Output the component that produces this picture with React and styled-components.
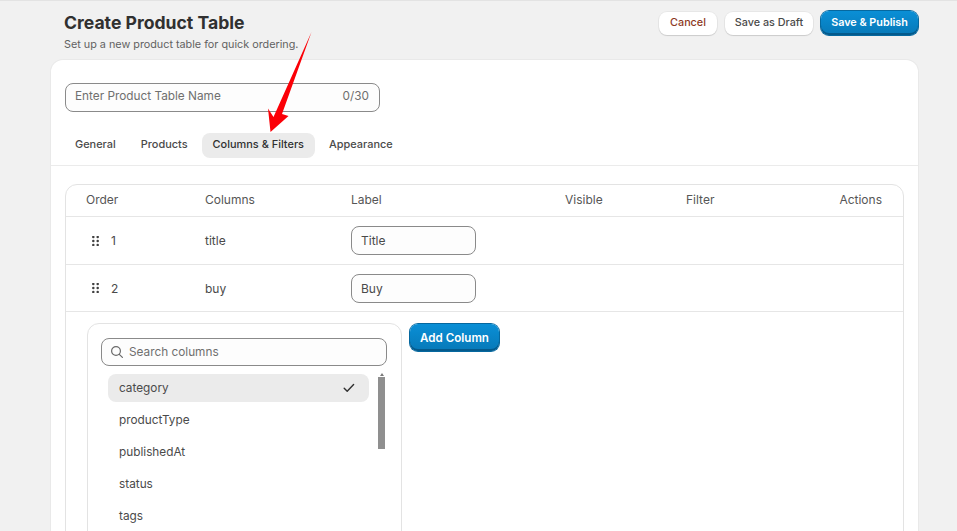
import React from 'react';
import styled, { createGlobalStyle } from 'styled-components';

const Global = createGlobalStyle`
  html, body { margin: 0; padding: 0; height: 531px; overflow: hidden; background: #f1f1f1; }
  body { font-family: Inter, "Liberation Sans", sans-serif; color: #303030; }
  * { box-sizing: border-box; }
`;

const Page = styled.div`
  position: relative;
  height: 531px;
  overflow: hidden;
  border-top: 1px solid #e3e3e3;
  padding: 0 39px 0 51px;
`;
const Header = styled.header`
  display: flex;
  justify-content: space-between;
  align-items: flex-start;
  height: 59px;
  padding: 10px 0 0 13px;
`;
const Title = styled.h1`
  margin: 0;
  font-size: 17.6px;
  line-height: 24px;
  font-weight: 650;
  color: #303030;
`;
const Subtitle = styled.p`
  margin: 2px 0 0;
  font-size: 10.8px;
  line-height: 16px;
  color: #616161;
`;
const Actions = styled.div`
  display: flex;
  gap: 8px;
  padding-top: 1px;
`;
const Button = styled.button`
  height: 23px;
  width: ${p => p.$w}px;
  padding: 0 0 2px;
  border: 0;
  border-radius: 8px;
  background: #fff;
  color: ${p => p.$tone || '#4a4a4a'};
  font: 550 10.8px Inter, sans-serif;
  box-shadow: 0 1px 1px rgba(0,0,0,.12), 0 0 0 1px rgba(0,0,0,.04);
`;
const Primary = styled.button`
  height: ${p => p.$h}px;
  width: ${p => p.$w}px;
  margin-top: ${p => p.$top || 0}px;
  padding: 0 0 ${p => p.$lift || 0}px;
  border: 0;
  border-radius: 8px;
  background: linear-gradient(#0a8fd6, #0779b8);
  color: #fff;
  font: 600 ${p => p.$size}px Inter, sans-serif;
  box-shadow: inset 0 -2px 0 #045a8c, 0 0 0 1px #06689f;
`;
const Card = styled.main`
  background: #fff;
  border-radius: 12px;
  box-shadow: 0 0 0 1px #e9e9e9;
  height: 600px;
`;
const Top = styled.div`
  padding: 23px 14px 7px;
  border-bottom: 1px solid #ebebeb;
`;
const NameField = styled.div`
  width: 315px;
  height: 29px;
  padding: 0 10px 3px 9px;
  display: flex;
  align-items: center;
  justify-content: space-between;
  background: #fdfdfd;
  border: 1px solid #8a8a8a;
  border-radius: 8px;
  font-size: 11.8px;
  color: #6f6f6f;
`;
const Tabs = styled.nav`
  display: flex;
  gap: 3px;
  margin-top: 21px;
  margin-left: -1px;
`;
const Tab = styled.div`
  height: 25px;
  padding: 0 11px 3px;
  display: flex;
  align-items: center;
  border-radius: 8px;
  font-size: 10.95px;
  font-weight: 500;
  background: ${p => (p.$active ? '#ebebeb' : 'transparent')};
  color: ${p => (p.$active ? '#303030' : '#4a4a4a')};
`;
const TableBox = styled.section`
  margin: 18px 14px 0;
  border: 1px solid #e3e3e3;
  border-radius: 12px;
`;
const Row = styled.div`
  display: grid;
  grid-template-columns: 119px 146px 214px 121px 1fr 100px;
  align-items: center;
  height: ${p => p.$h}px;
  padding: 0 21px 0 20px;
  border-bottom: 1px solid #e6e6e6;
  font-size: 12px;
  color: #4a4a4a;
`;
const HeadCell = styled.div`
  text-align: ${p => (p.$right ? 'right' : 'left')};
  color: #565656;
  padding-bottom: 2px;
`;
const OrderCell = styled.div`
  display: flex;
  align-items: center;
  gap: 11px;
  padding-left: 6px;
`;
const LabelField = styled.div`
  width: 125px;
  height: 29px;
  padding: 0 9px;
  display: flex;
  align-items: center;
  border: 1px solid #8a8a8a;
  border-radius: 8px;
  background: #fdfdfd;
  color: #4a4a4a;
`;
const AddArea = styled.div`
  display: flex;
  align-items: flex-start;
  gap: 8px;
  padding: 11px 21px;
`;
const Panel = styled.div`
  width: 315px;
  height: 260px;
  padding: 14px 14px 0 13px;
  border: 1px solid #e3e3e3;
  border-radius: 12px;
`;
const Search = styled.div`
  height: 28px;
  padding: 0 8px 1px;
  display: flex;
  align-items: center;
  gap: 5px;
  border: 1px solid #8a8a8a;
  border-radius: 8px;
  background: #fdfdfd;
  font-size: 11.8px;
  color: #6f6f6f;
`;
const ListWrap = styled.div`
  display: flex;
  gap: 9px;
  margin-top: 8px;
  padding-left: 7px;
`;
const List = styled.div`
  width: 261px;
`;
const Item = styled.div`
  height: 28px;
  margin-bottom: 4px;
  padding: 0 14px 1px 11px;
  display: flex;
  align-items: center;
  justify-content: space-between;
  border-radius: 8px;
  font-size: 11.8px;
  color: #4a4a4a;
  background: ${p => (p.$selected ? '#ebebeb' : 'transparent')};
`;
const ScrollTrack = styled.div`
  width: 7px;
  display: flex;
  flex-direction: column;
  align-items: center;
`;
const ScrollThumb = styled.div`
  width: 7px;
  height: 72px;
  margin-top: 1px;
  background: #8f8f8f;
`;
const ScrollUp = styled.div`
  width: 0;
  height: 0;
  border-left: 2.5px solid transparent;
  border-right: 2.5px solid transparent;
  border-bottom: 3px solid #7a7a7a;
  margin-top: -1px;
`;
const ArrowOverlay = styled.svg`
  position: absolute;
  left: 0;
  top: -1px;
  pointer-events: none;
`;

const Grip = () => (
  <svg width="8" height="10" viewBox="0 0 8 10" fill="#3f3f3f">
    {[1, 5, 9].map(y => [1.3, 5.7].map(x => <circle key={`${x}-${y}`} cx={x} cy={y} r="1.25" />))}
  </svg>
);

const SearchIcon = () => (
  <svg width="14" height="14" viewBox="0 0 14 14" fill="none" stroke="#6a6a6a" strokeWidth="1.2" strokeLinecap="round">
    <circle cx="6" cy="6" r="4.4" />
    <path d="M9.3 9.3 12.4 12.4" />
  </svg>
);

const Check = () => (
  <svg width="12" height="10" viewBox="0 0 12 10" fill="none" stroke="#303030" strokeWidth="1.4" strokeLinecap="round" strokeLinejoin="round">
    <path d="M1.2 5.2 4.2 8.2 10.6 1.6" />
  </svg>
);

const columns = ['category', 'productType', 'publishedAt', 'status', 'tags'];

export default function App() {
  return (
    <>
      <Global />
      <Page>
        <Header>
          <div>
            <Title>Create Product Table</Title>
            <Subtitle>Set up a new product table for quick ordering.</Subtitle>
          </div>
          <Actions>
            <Button $w={58} $tone="#8e3a1e">Cancel</Button>
            <Button $w={88}>Save as Draft</Button>
            <Primary $w={97} $h={24} $size={10.8} $top={-1} $lift={2}>Save &amp; Publish</Primary>
          </Actions>
        </Header>
        <Card>
          <Top>
            <NameField>
              <span>Enter Product Table Name</span>
              <span>0/30</span>
            </NameField>
            <Tabs>
              <Tab>General</Tab>
              <Tab>Products</Tab>
              <Tab $active>Columns &amp; Filters</Tab>
              <Tab>Appearance</Tab>
            </Tabs>
          </Top>
          <TableBox>
            <Row $h={32}>
              <HeadCell>Order</HeadCell>
              <HeadCell>Columns</HeadCell>
              <HeadCell>Label</HeadCell>
              <HeadCell>Visible</HeadCell>
              <HeadCell>Filter</HeadCell>
              <HeadCell $right>Actions</HeadCell>
            </Row>
            <Row $h={48}>
              <OrderCell><Grip /><span>1</span></OrderCell>
              <div>title</div>
              <LabelField>Title</LabelField>
            </Row>
            <Row $h={47}>
              <OrderCell><Grip /><span>2</span></OrderCell>
              <div>buy</div>
              <LabelField>Buy</LabelField>
            </Row>
            <AddArea>
              <Panel>
                <Search>
                  <SearchIcon />
                  <span>Search columns</span>
                </Search>
                <ListWrap>
                  <List>
                    {columns.map((c, i) => (
                      <Item key={c} $selected={i === 0}>
                        <span>{c}</span>
                        {i === 0 && <Check />}
                      </Item>
                    ))}
                  </List>
                  <ScrollTrack>
                    <ScrollUp />
                    <ScrollThumb />
                  </ScrollTrack>
                </ListWrap>
              </Panel>
              <Primary $w={89} $h={27} $size={11.6} $top={1}>Add Column</Primary>
            </AddArea>
          </TableBox>
        </Card>
        <ArrowOverlay width="957" height="531" viewBox="0 0 957 531">
          <polygon fill="#fb0007" points="311.5,32 282,114 288.5,116 270.5,132 268,108.5 273.5,117" />
        </ArrowOverlay>
      </Page>
    </>
  );
}
